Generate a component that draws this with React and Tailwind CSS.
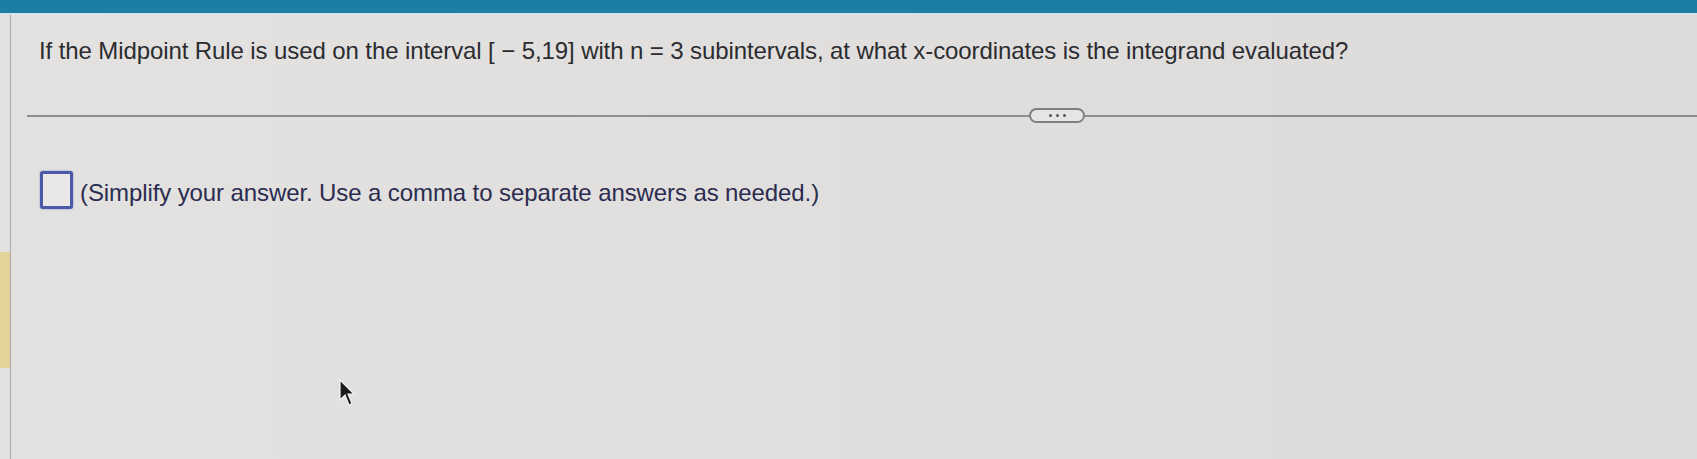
import React from 'react';

function Cursor() {
  return (
    <svg width="18" height="30" viewBox="0 0 18 30" className="absolute left-[338px] top-[378px]">
      <path d="M2 2 L2 22 L7 17 L11 27 L14 25.5 L10 16 L16 16 Z" fill="#1c1c1e" stroke="#f2f2f2" strokeWidth="1.2" />
    </svg>
  );
}

export default function App() {
  return (
    <div
      className="relative w-full h-[459px] overflow-hidden flex flex-col bg-gradient-to-r from-[#e3e2e0] via-[#e1dfdd] to-[#dddbd9] text-[#2f2f33]"
      style={{ fontFamily: '"Liberation Sans", Arial, sans-serif' }}
    >
      {/* top bar */}
      <div className="h-[13px] bg-[#1b7ea4] shrink-0" />
      <div className="h-[2px] bg-[#d9e2e8] shrink-0" />

      <div className="flex flex-1">
        {/* left gutter */}
        <div className="w-[11px] border-r border-[#a9a8ab] flex flex-col bg-[#e2e1df]">
          <div className="h-[237px]" />
          <div className="h-[116px] bg-[#e3d29a]" />
        </div>

        {/* main */}
        <div className="flex-1 flex flex-col">
          <p className="pl-[28px] pt-[22px] text-[24px] leading-[28px] tracking-[-0.1px] text-[#2c2c30]">
            If the Midpoint Rule is used on the interval [ − 5,19] with n = 3 subintervals, at what x-coordinates is the integrand evaluated?
          </p>

          <div className="mt-[43px] ml-[16px] flex items-center">
            <div className="w-[1002px] h-[2px] bg-[#8d8c93]" />
            <button className="h-[15px] w-[56px] rounded-full border-2 border-[#7f7e85] bg-[#e6e5e3] flex items-center justify-center gap-[4px]">
              <span className="w-[3px] h-[3px] rounded-full bg-[#55545c]" />
              <span className="w-[3px] h-[3px] rounded-full bg-[#55545c]" />
              <span className="w-[3px] h-[3px] rounded-full bg-[#55545c]" />
            </button>
            <div className="flex-1 h-[2px] bg-[#8d8c93]" />
          </div>

          <div className="mt-[48px] ml-[29px] flex items-start gap-[7px]">
            <div className="w-[33px] h-[38px] border-[3px] border-[#4b5aa8] rounded-[3px] bg-[#e9e8e7] shadow-[0_0_2px_#7d88c4]" />
            <span className="mt-[8px] text-[24px] leading-[28px] tracking-[-0.1px] text-[#2b2c50]">
              (Simplify your answer. Use a comma to separate answers as needed.)
            </span>
          </div>
        </div>
      </div>

      <Cursor />
    </div>
  );
}
